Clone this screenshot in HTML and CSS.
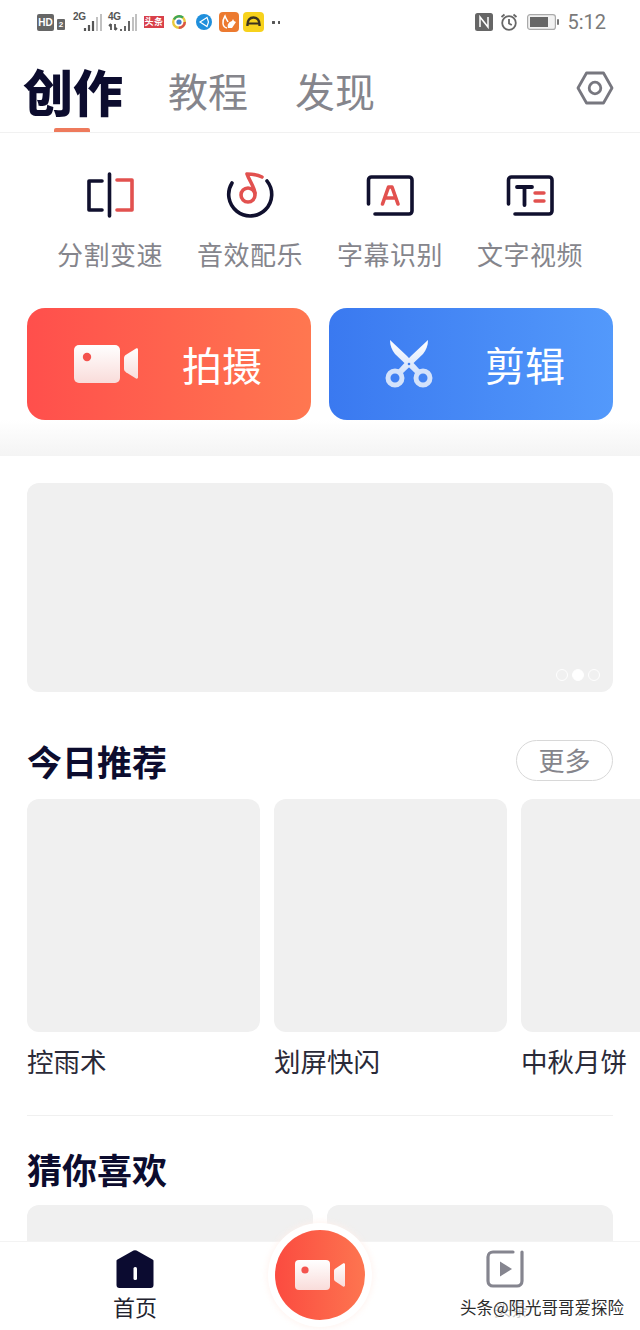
FILE: index.html
```html
<!DOCTYPE html>
<html lang="zh-CN">

<head>
    <meta charset="UTF-8">
    <meta name="viewport" content="width=device-width, initial-scale=1.0">
    <title>创作</title>
    <link rel="stylesheet" href="styles.css">
</head>

<body>
    <div class="phone">
        <div class="statusBar">
            <div class="statusLeft">
                <span class="hdBadge">HD</span>
                <span class="simBadge">2</span>
                <span class="netGroup">
                    <span class="netLabel">2G</span>
                    <svg class="bars" width="19" height="18" viewBox="0 0 19 18">
                        <path d="M2 18v-3M6 18v-6M10 18V8" stroke="#555" stroke-width="2.200" />
                        <path d="M14 18V4M18 18V1" stroke="#bbb" stroke-width="1.800" />
                    </svg>
                </span>
                <span class="netGroup net4g">
                    <span class="netLabel">4G</span>
                    <svg class="bars" width="29" height="18" viewBox="0 0 29 18">
                        <path d="M3 11v6M1 13l2-2M7 11v6M7 17l2-2M13 18v-2M17 18v-5M21 18V8" stroke="#555" stroke-width="1.800" />
                        <path d="M25 18V4M28 18V1" stroke="#bbb" stroke-width="1.800" />
                    </svg>
                </span>
                <span class="toutiao">头条</span>
                <svg class="appIcon" width="16" height="16" viewBox="0 0 16 16">
                    <circle cx="8" cy="8" r="5.800" fill="none" stroke="#e8c93c" stroke-width="2.400" />
                    <path d="M3 5.500A6 6 0 0 1 12 3.500" fill="none" stroke="#3aa65b" stroke-width="2.400" />
                    <path d="M13.800 8a6 6 0 0 1-6 5.800" fill="none" stroke="#d9534a" stroke-width="2.400" />
                    <circle cx="8" cy="8" r="2.600" fill="#3d7fd0" />
                </svg>
                <svg class="appIcon" width="16" height="16" viewBox="0 0 16 16">
                    <circle cx="8" cy="8" r="8" fill="#1f8fdc" />
                    <path d="M11 3.500L4 8l7 4.500 1.500-4.500z" fill="none" stroke="#fff" stroke-width="1.200" />
                </svg>
                <svg class="appTile" width="20" height="20" viewBox="0 0 20 20">
                    <rect width="20" height="20" rx="4" fill="#ec7a30" />
                    <path d="M8 16C3 15 3 9 6 4c1 3 2 4 3 6" fill="none" stroke="#fff" stroke-width="1.500" />
                    <path d="M9 16c-1-4 1-6 4-7l1-2 1 2 2 1-2 3-2 3z" fill="#fff" />
                </svg>
                <svg class="appTile" width="21" height="20" viewBox="0 0 21 20">
                    <rect width="21" height="20" rx="4" fill="#f7d21c" />
                    <path d="M4.500 14c-.5-6 2.500-8.500 6-8.500s6.500 2.500 6 8.500" fill="none" stroke="#3a3320" stroke-width="2.400" />
                    <path d="M5 11.500h11" stroke="#3a3320" stroke-width="2" />
                </svg>
                <span class="moreDots"></span>
            </div>
            <div class="statusRight">
                <svg width="18" height="18" viewBox="0 0 18 18">
                    <rect width="18" height="18" rx="2.500" fill="#666" />
                    <path d="M5 14V4l8 10V4" fill="none" stroke="#fff" stroke-width="1.500" />
                </svg>
                <svg width="18" height="18" viewBox="0 0 18 18" fill="none" stroke="#666" stroke-width="1.800">
                    <circle cx="9" cy="10" r="6.800" />
                    <path d="M9 6v4.500l2.800 1.500M1.500 4l3-2.500M16.500 4l-3-2.500" />
                </svg>
                <svg class="battery" width="32" height="16" viewBox="0 0 32 16">
                    <rect x=".6" y=".6" width="27.800" height="14.800" rx="2.500" fill="#f2f2f2" stroke="#aaa" stroke-width="1.200" />
                    <rect x="3" y="3" width="18" height="10" fill="#666" />
                    <rect x="30" y="5" width="2" height="6" rx="1" fill="#777" />
                </svg>
                <span class="clock">5:12</span>
            </div>
        </div>

        <div class="tabs">
            <span class="tab tabActive">创作</span>
            <span class="tab">教程</span>
            <span class="tab">发现</span>
            <svg class="settingsIcon" width="38" height="34" viewBox="0 0 38 34" fill="none" stroke="#77777f" stroke-width="2.800">
                <path d="M10.500 2h17L36 17l-8.500 15h-17L2 17z" stroke-linejoin="round" />
                <circle cx="19" cy="17" r="5.800" />
            </svg>
        </div>

        <div class="content">
            <div class="tools">
                <div class="tool">
                    <svg width="48" height="46" viewBox="0 0 48 46" fill="none" stroke-width="3.600" stroke-linecap="round" stroke-linejoin="round">
                        <path d="M16 9H3v29h13M23.500 2v42" stroke="#10102e" />
                        <path d="M31 8h15v30H31" stroke="#e2514f" />
                    </svg>
                    <span class="toolLabel">分割变速</span>
                </div>
                <div class="tool">
                    <svg width="48" height="46" viewBox="0 0 48 46" fill="none" stroke-width="3.600" stroke-linecap="round">
                        <path d="M6 11A21.500 21.500 0 1 0 41 9" stroke="#10102e" />
                        <circle cx="22" cy="23" r="7" stroke="#e2514f" />
                        <path d="M29 21C28 14 23 8 21 2c5 0 11 1 15 3" stroke="#e2514f" stroke-linejoin="round" />
                    </svg>
                    <span class="toolLabel">音效配乐</span>
                </div>
                <div class="tool">
                    <svg width="48" height="46" viewBox="0 0 48 46" fill="none" stroke-linecap="round" stroke-linejoin="round">
                        <path d="M2.500 32V8a3 3 0 0 1 3-3H43a3 3 0 0 1 3 3v31a3 3 0 0 1-3 3H9" stroke="#10102e" stroke-width="3.600" />
                        <path d="M16.500 32l6-17h3.500l6 17M20 26h8" stroke="#e2514f" stroke-width="3.600" />
                    </svg>
                    <span class="toolLabel">字幕识别</span>
                </div>
                <div class="tool">
                    <svg width="48" height="46" viewBox="0 0 48 46" fill="none" stroke-linecap="round" stroke-linejoin="round">
                        <path d="M2.500 32V8a3 3 0 0 1 3-3H43a3 3 0 0 1 3 3v31a3 3 0 0 1-3 3H9" stroke="#10102e" stroke-width="3.600" />
                        <path d="M11 15h15M18.500 15v18" stroke="#10102e" stroke-width="3.800" />
                        <path d="M29 21h9M29 29h9" stroke="#e2514f" stroke-width="3.400" />
                    </svg>
                    <span class="toolLabel">文字视频</span>
                </div>
            </div>

            <div class="actions">
                <div class="actionBtn btnShoot">
                    <svg class="actionIcon" width="64" height="40" viewBox="0 0 64 40">
                        <defs>
                            <linearGradient id="camFill" x1="0" y1="0" x2="0" y2="1">
                                <stop offset="0" stop-color="#fff" />
                                <stop offset="1" stop-color="#f9dcda" />
                            </linearGradient>
                        </defs>
                        <rect y="1" width="46" height="38" rx="5" fill="url(#camFill)" />
                        <circle cx="13" cy="13" r="4.200" fill="#f4534e" />
                        <path d="M50 14c0-1.500 1-2.500 2-3.200l10-6.300c1-.5 2 0 2 1v28c0 1-1 1.500-2 1l-10-6.300c-1-.7-2-1.700-2-3.200z" fill="url(#camFill)" />
                    </svg>
                    <span class="actionLabel">拍摄</span>
                </div>
                <div class="actionBtn btnEdit">
                    <svg class="actionIcon" width="48" height="48" viewBox="0 0 48 48">
                        <defs>
                            <linearGradient id="cutFill" x1="0" y1="0" x2="0" y2="1">
                                <stop offset="0" stop-color="#fff" />
                                <stop offset="1" stop-color="#d3e2fb" />
                            </linearGradient>
                        </defs>
                        <path d="M5 0c0 6 2 10 5 14l21 20 4-4-13-14z" fill="url(#cutFill)" />
                        <path d="M43 0c0 6-2 10-5 14L17 34l-4-4 13-14z" fill="url(#cutFill)" />
                        <circle cx="24" cy="24" r="1.300" fill="#3f7ff0" />
                        <circle cx="10" cy="38" r="7" fill="none" stroke="#d3e2fb" stroke-width="5" />
                        <circle cx="38" cy="38" r="7" fill="none" stroke="#d3e2fb" stroke-width="5" />
                    </svg>
                    <span class="actionLabel">剪辑</span>
                </div>
            </div>
            <div class="fadeBand"></div>

            <div class="banner">
                <div class="bannerDots">
                    <span class="dot"></span>
                    <span class="dot dotOn"></span>
                    <span class="dot"></span>
                </div>
            </div>

            <div class="sectionHead">
                <h2 class="sectionTitle">今日推荐</h2>
                <span class="moreBtn">更多</span>
            </div>
            <div class="cardRow">
                <div class="card">
                    <div class="cardThumb"></div>
                    <div class="cardName">控雨术</div>
                </div>
                <div class="card">
                    <div class="cardThumb"></div>
                    <div class="cardName">划屏快闪</div>
                </div>
                <div class="card">
                    <div class="cardThumb"></div>
                    <div class="cardName">中秋月饼</div>
                </div>
            </div>

            <div class="divider"></div>

            <h2 class="sectionTitle likeTitle">猜你喜欢</h2>
            <div class="likeRow">
                <div class="likeCard"></div>
                <div class="likeCard"></div>
            </div>
        </div>

        <div class="navBar">
            <div class="navItem">
                <svg width="38" height="38" viewBox="0 0 38 38">
                    <path d="M17.500 .6a3 3 0 0 1 3 0l16 8.900a1.500 1.500 0 0 1 1 1.500v24a3 3 0 0 1-3 3H3.500a3 3 0 0 1-3-3V11a1.500 1.500 0 0 1 1-1.500z" fill="#0b0b30" />
                    <rect x="17.500" y="17" width="3.500" height="13" rx="1.500" fill="#fff" />
                </svg>
                <span class="navLabel">首页</span>
            </div>
            <div></div>
            <div class="navItem">
                <svg width="38" height="38" viewBox="0 0 38 38" fill="none">
                    <path d="M27 2H7a5 5 0 0 0-5 5v24a5 5 0 0 0 5 5h24a5 5 0 0 0 5-5V2" stroke="#85858f" stroke-width="3.200" stroke-linecap="round" />
                    <path d="M14 11.500l12 7.500-12 7.500z" fill="#85858f" />
                </svg>
            </div>
        </div>

        <div class="fab">
            <svg width="50" height="30" viewBox="0 0 50 30">
                <rect width="35" height="30" rx="4" fill="url(#camFill)" />
                <circle cx="10" cy="10" r="3.600" fill="#f4534e" />
                <path d="M39 11c0-1 .6-2 1.500-2.500l7.500-5c1-.5 2 0 2 1v21c0 1-1 1.500-2 1l-7.500-5c-.9-.5-1.500-1.500-1.500-2.500z" fill="url(#camFill)" />
            </svg>
        </div>

        <div class="watermark"><span class="markGhost">头条</span>头条@阳光哥哥爱探险</div>
    </div>
</body>

</html>
```

FILE: styles.css
```css
* {
    box-sizing: border-box;
}

html, body {
    margin: 0;
    height: 100%;
    background: #fff;
}

body {
    font-family: "Noto Sans CJK SC", "Noto Sans", sans-serif;
    color: #0c0c2e;
}

.phone {
    position: relative;
    width: 640px;
    height: 1330px;
    overflow: hidden;
    display: flex;
    flex-direction: column;
}

/* status bar */
.statusBar {
    flex: none;
    height: 42px;
    padding: 12px 34px 0 37px;
    display: flex;
    justify-content: space-between;
    align-items: flex-start;
}

.statusLeft {
    display: flex;
    align-items: center;
    height: 20px;
}

.statusRight {
    display: flex;
    align-items: center;
    gap: 7px;
    height: 20px;
}

.battery {
    margin-left: 2px;
}

.hdBadge {
    width: 17px;
    height: 17px;
    border-radius: 2px;
    background: #666;
    color: #fff;
    font: bold 10px/17px "Liberation Sans", sans-serif;
    text-align: center;
}

.simBadge {
    width: 8px;
    height: 11px;
    margin: 4px 0 0 3px;
    border-radius: 1px;
    background: #666;
    color: #fff;
    font: bold 8px/11px "Liberation Sans", sans-serif;
    text-align: center;
}

.netGroup {
    display: flex;
    align-items: flex-start;
    margin-left: 8px;
    height: 20px;
}

.net4g {
    margin-left: 6px;
}

.netLabel {
    width: 10px;
    color: #555;
    font: bold 10px/10px "Liberation Sans", sans-serif;
    letter-spacing: -.4px;
    white-space: nowrap;
}

.bars {
    margin-top: 1px;
}

.net4g .bars {
    margin-left: -10px;
}

.toutiao {
    width: 20px;
    height: 12px;
    margin-left: 7px;
    background: #d8404a;
    color: #fff;
    font-size: 9px;
    font-weight: bold;
    line-height: 12px;
    text-align: center;
    letter-spacing: .5px;
    white-space: nowrap;
}

.appIcon {
    margin-left: 7px;
}

.appIcon + .appIcon {
    margin-left: 9px;
}

.appTile {
    margin-left: 7px;
}

.appTile + .appTile {
    margin-left: 4px;
}

.moreDots {
    width: 8px;
    height: 3px;
    margin-left: 8px;
    background: radial-gradient(circle at 1.500px 1.500px, #555 1.400px, transparent 1.600px) 0 0 / 6px 3px repeat-x;
}

.clock {
    margin-left: 1px;
    color: #7a7a7a;
    font: 20px/20px Roboto, sans-serif;
}

/* top tabs */
.tabs {
    flex: none;
    position: relative;
    height: 91px;
    padding: 24px 26px 0 23px;
    display: flex;
    align-items: flex-start;
    border-bottom: 1px solid #f1f1f1;
}

.tab {
    margin-right: 47px;
    color: #85858c;
    font-size: 40px;
    line-height: 48px;
}

.tabActive {
    position: relative;
    margin-right: 45px;
    color: #0c0c2e;
    font-size: 50px;
    font-weight: 900;
}

.tabActive::after {
    content: "";
    position: absolute;
    left: 31px;
    bottom: -18px;
    width: 36px;
    height: 4px;
    border-radius: 2px 2px 0 0;
    background: #ee7a5c;
}

.settingsIcon {
    margin: 5px 0 0 auto;
}

.content {
    flex: 1;
    min-height: 0;
    overflow: hidden;
}

/* tool shortcuts */
.tools {
    padding: 39px 40px 0;
    display: grid;
    grid-template-columns: repeat(4, 140px);
}

.tool {
    display: flex;
    flex-direction: column;
    align-items: center;
}

.toolLabel {
    margin-top: 21px;
    color: #85858c;
    font-size: 26px;
    line-height: 30px;
    letter-spacing: .5px;
    white-space: nowrap;
}

/* big buttons */
.actions {
    margin-top: 39px;
    padding: 0 27px;
    display: grid;
    grid-template-columns: 1fr 1fr;
    gap: 18px;
}

.actionBtn {
    min-width: 0;
    height: 112px;
    border-radius: 18px;
    display: flex;
    align-items: center;
    color: #fff;
}

.btnShoot {
    padding-left: 47px;
    background: linear-gradient(90deg, #ff4f4c, #ff7750);
}

.btnEdit {
    padding-left: 56px;
    background: linear-gradient(90deg, #3a79f0, #5399fb);
}

.actionLabel {
    margin-left: 44px;
    font-size: 40px;
    line-height: 48px;
}

.btnEdit .actionLabel {
    margin-left: 52px;
}

.fadeBand {
    height: 36px;
    background: linear-gradient(180deg, #fff, #f4f4f4);
}

/* banner */
.banner {
    position: relative;
    height: 209px;
    margin: 27px 27px 0;
    border-radius: 12px;
    background: #f0f0f0;
}

.bannerDots {
    position: absolute;
    right: 13px;
    bottom: 11px;
    display: flex;
    gap: 4px;
}

.dot {
    width: 12px;
    height: 12px;
    border: 1.500px solid #fff;
    border-radius: 50%;
}

.dotOn {
    background: #fff;
}

/* sections */
.sectionHead {
    margin: 48px 27px 0;
    height: 41px;
    display: flex;
    justify-content: space-between;
    align-items: center;
}

.sectionTitle {
    margin: 0;
    color: #0c0c2e;
    font-size: 35px;
    font-weight: 700;
    line-height: 40px;
}

.moreBtn {
    width: 97px;
    height: 41px;
    border: 1px solid #d8d8d8;
    border-radius: 21px;
    color: #85858c;
    font-size: 26px;
    line-height: 37px;
    text-align: center;
}

.cardRow {
    margin-top: 18px;
    padding: 0 0 8px 27px;
    display: flex;
    gap: 14px;
    overflow: hidden;
}

.card {
    flex: none;
    width: 233px;
}

.cardThumb {
    height: 233px;
    border-radius: 12px;
    background: #f0f0f0;
}

.cardName {
    margin-top: 14px;
    color: #2a2a38;
    font-size: 26.500px;
    line-height: 30px;
    white-space: nowrap;
}

.divider {
    height: 1px;
    margin: 31px 27px 0;
    background: #f0f0f0;
}

.likeTitle {
    margin: 33px 27px 0;
}

.likeRow {
    margin-top: 16px;
    padding: 0 27px;
    display: flex;
    gap: 14px;
}

.likeCard {
    flex: 1;
    height: 233px;
    border-radius: 12px;
    background: #f0f0f0;
}

/* bottom bar */
.navBar {
    flex: none;
    height: 89px;
    padding-top: 8px;
    display: grid;
    grid-template-columns: 270px 1fr 270px;
    background: #fff;
    border-top: 1px solid #f3f3f3;
}

.navItem {
    display: flex;
    flex-direction: column;
    align-items: center;
}

.navLabel {
    margin-top: 4px;
    color: #22222e;
    font-size: 22px;
    line-height: 28px;
}

.fab {
    position: absolute;
    left: 275px;
    top: 1230px;
    width: 90px;
    height: 90px;
    border-radius: 50%;
    background: linear-gradient(90deg, #fb4b40, #fd7550);
    box-shadow: 0 0 0 7px #fff, 0 0 6px 8px rgba(255, 240, 235, .8);
    display: flex;
    justify-content: center;
    align-items: center;
}

.watermark {
    position: absolute;
    z-index: 1;
    left: 460px;
    top: 1295px;
    color: #2b2b2b;
    font-size: 16.500px;
    line-height: 24px;
    white-space: nowrap;
    text-shadow: 0 0 2px #fff;
}

.markGhost {
    position: absolute;
    left: 34px;
    top: 2px;
    color: #c9c9c9;
    font-size: 17px;
    z-index: -1;
}
```
